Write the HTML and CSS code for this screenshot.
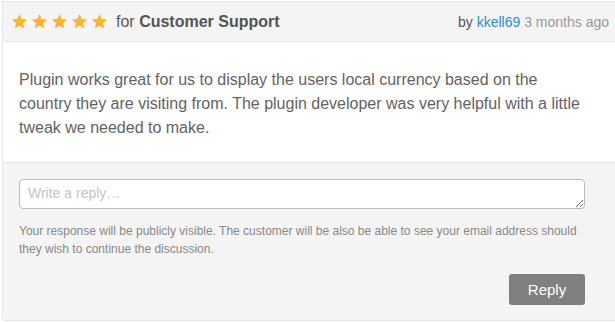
FILE: index.html
```html
<!DOCTYPE html>
<html lang="en">
<head>
    <meta charset="UTF-8">
    <title>Review</title>
    <link rel="stylesheet" href="styles.css">
</head>
<body>
    <div class="review">
        <!-- Header -->
        <div class="review-head">
            <div class="rating">
                <span class="stars">
                    <svg viewBox="0 0 20 20"><path d="M10 1.2l2.6 5.9 6.4.6-4.8 4.3 1.4 6.3L10 15l-5.6 3.3 1.4-6.3L1 7.7l6.4-.6z"/></svg>
                    <svg viewBox="0 0 20 20"><path d="M10 1.2l2.6 5.9 6.4.6-4.8 4.3 1.4 6.3L10 15l-5.6 3.3 1.4-6.3L1 7.7l6.4-.6z"/></svg>
                    <svg viewBox="0 0 20 20"><path d="M10 1.2l2.6 5.9 6.4.6-4.8 4.3 1.4 6.3L10 15l-5.6 3.3 1.4-6.3L1 7.7l6.4-.6z"/></svg>
                    <svg viewBox="0 0 20 20"><path d="M10 1.2l2.6 5.9 6.4.6-4.8 4.3 1.4 6.3L10 15l-5.6 3.3 1.4-6.3L1 7.7l6.4-.6z"/></svg>
                    <svg viewBox="0 0 20 20"><path d="M10 1.2l2.6 5.9 6.4.6-4.8 4.3 1.4 6.3L10 15l-5.6 3.3 1.4-6.3L1 7.7l6.4-.6z"/></svg>
                </span>
                <span class="for">for <strong>Customer Support</strong></span>
            </div>
            <div class="meta">by <a href="#">kkell69</a> <span class="ago">3 months ago</span></div>
        </div>

        <!-- Body -->
        <div class="review-body">
            <p>Plugin works great for us to display the users local currency based on the country they are visiting from. The plugin developer was very helpful with a little tweak we needed to make.</p>
        </div>

        <!-- Reply form -->
        <div class="review-reply">
            <textarea placeholder="Write a reply…"></textarea>
            <p class="note">Your response will be publicly visible. The customer will be also be able to see your email address should they wish to continue the discussion.</p>
            <div class="actions">
                <button class="reply-btn">Reply</button>
            </div>
        </div>
    </div>
</body>
</html>
```

FILE: styles.css
```css
* {
    margin: 0;
    padding: 0;
    box-sizing: border-box;
}

body {
    font-family: 'Liberation Sans', Arial, sans-serif;
    color: #555;
    background: #fff;
    padding: 1px 0 0 2px;
    overflow: hidden;
}

.review {
    width: 620px;
    border: 1px solid #e3e6ea;
    border-radius: 0 0 0 3px;
}

/* Header */
.review-head {
    height: 40px;
    display: flex;
    align-items: center;
    justify-content: space-between;
    padding: 0 12px 0 8px;
    background: #f4f4f4;
    border-bottom: 1px solid #e3e6ea;
}

.rating {
    display: flex;
    align-items: center;
}

.stars {
    display: flex;
    gap: 3px;
    margin-right: 8px;
}

.stars svg {
    width: 17px;
    height: 17px;
    fill: #f7b733;
}

.for {
    font-size: 16px;
    color: #5a5a5a;
}

.for strong {
    font-weight: bold;
    color: #555;
}

.meta {
    font-size: 14px;
    color: #555;
}

.meta a {
    color: #2a8ecf;
    text-decoration: none;
}

.ago {
    color: #999;
}

/* Body */
.review-body {
    background: #fff;
    padding: 26px 30px 22px 16px;
    border-bottom: 1px solid #e3e6ea;
}

.review-body p {
    font-size: 16px;
    line-height: 24px;
    color: #636363;
}

/* Reply form */
.review-reply {
    background: #f4f4f4;
    padding: 16px 36px 15px 16px;
}

.review-reply textarea {
    display: block;
    width: 100%;
    height: 30px;
    padding: 5px 8px;
    border: 1px solid #bbb;
    border-radius: 4px;
    font-family: inherit;
    font-size: 14px;
    color: #555;
    resize: vertical;
}

.review-reply textarea::placeholder {
    color: #c4c4c4;
}

.note {
    margin-top: 13px;
    font-size: 12px;
    line-height: 18px;
    color: #888;
}

.actions {
    display: flex;
    justify-content: flex-end;
    margin-top: 16px;
}

.reply-btn {
    width: 76px;
    height: 31px;
    border: 0;
    border-radius: 3px;
    background: #808080;
    color: #fff;
    font-family: inherit;
    font-size: 15px;
}
```
